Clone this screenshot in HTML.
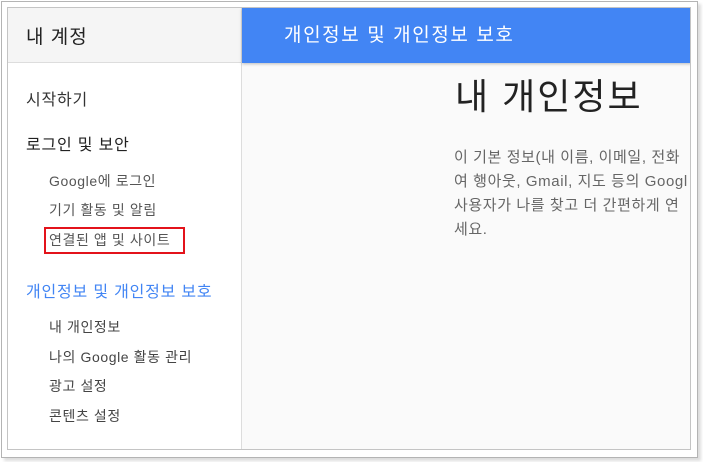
<!DOCTYPE html>
<html><head><meta charset="utf-8"><style>
*{margin:0;padding:0;box-sizing:border-box}
body{width:703px;height:462px;background:#fff;font-family:"Liberation Sans","Noto Sans CJK KR",sans-serif;position:relative;overflow:hidden}
.outer{position:absolute;left:1px;top:1px;width:697px;height:457px;border:1px solid #b4b4b4;background:#fff;box-shadow:3px 3px 3px #ddd}
.inner{position:absolute;left:7px;top:7px;width:684px;height:443px;border:1px solid #c4c4c4;background:#fafafa;overflow:hidden}
.side{position:absolute;left:0;top:0;width:234px;height:441px;background:#fff;border-right:1px solid #ddd}
.shead{height:55px;background:#f5f5f5;border-bottom:1px solid #ddd;font-size:19px;color:#222;padding:14px 0 0 18px;letter-spacing:1px}
.t{position:absolute;white-space:nowrap}
.blue{position:absolute;left:234px;top:0;width:450px;height:55px;background:#4285f4;color:#fff;font-size:19px;padding:12px 0 0 42px;letter-spacing:1.6px;box-shadow:0 1px 3px rgba(0,0,0,.25)}
.red{position:absolute;left:36px;top:219px;width:141px;height:27px;border:2px solid #e3131b}
.s14{font-size:14px;letter-spacing:0.6px}
</style></head><body>
<div class="outer"></div>
<div class="inner">
 <div class="side">
  <div class="shead">내 계정</div>
  <div class="t" style="left:18px;top:78px;font-size:16px;color:#333;letter-spacing:0.8px">시작하기</div>
  <div class="t" style="left:18px;top:123px;font-size:16px;color:#222;letter-spacing:0.8px">로그인 및 보안</div>
  <div class="t s14" style="left:41px;top:163px;color:#555">Google에 로그인</div>
  <div class="t s14" style="left:41px;top:192px;color:#555">기기 활동 및 알림</div>
  <div class="t s14" style="left:41px;top:222px;color:#555">연결된 앱 및 사이트</div>
  <div class="red"></div>
  <div class="t" style="left:18px;top:270px;font-size:16px;color:#4285f4;letter-spacing:0.8px">개인정보 및 개인정보 보호</div>
  <div class="t s14" style="left:41px;top:309px;color:#444">내 개인정보</div>
  <div class="t s14" style="left:41px;top:339px;color:#444">나의 Google 활동 관리</div>
  <div class="t s14" style="left:41px;top:368px;color:#444">광고 설정</div>
  <div class="t s14" style="left:41px;top:398px;color:#444">콘텐츠 설정</div>
 </div>
 <div class="blue">개인정보 및 개인정보 보호</div>
 <div class="t" style="left:447px;top:60px;font-size:36px;color:#222;letter-spacing:2px">내 개인정보</div>
 <div class="t" style="left:446px;top:138px;font-size:15px;color:#666;line-height:24px;width:240px;overflow:hidden;letter-spacing:0.6px">이 기본 정보(내 이름, 이메일, 전화<br>여 행아웃, Gmail, 지도 등의 Googl<br>사용자가 나를 찾고 더 간편하게 연<br>세요.</div>
</div>
</body></html>
